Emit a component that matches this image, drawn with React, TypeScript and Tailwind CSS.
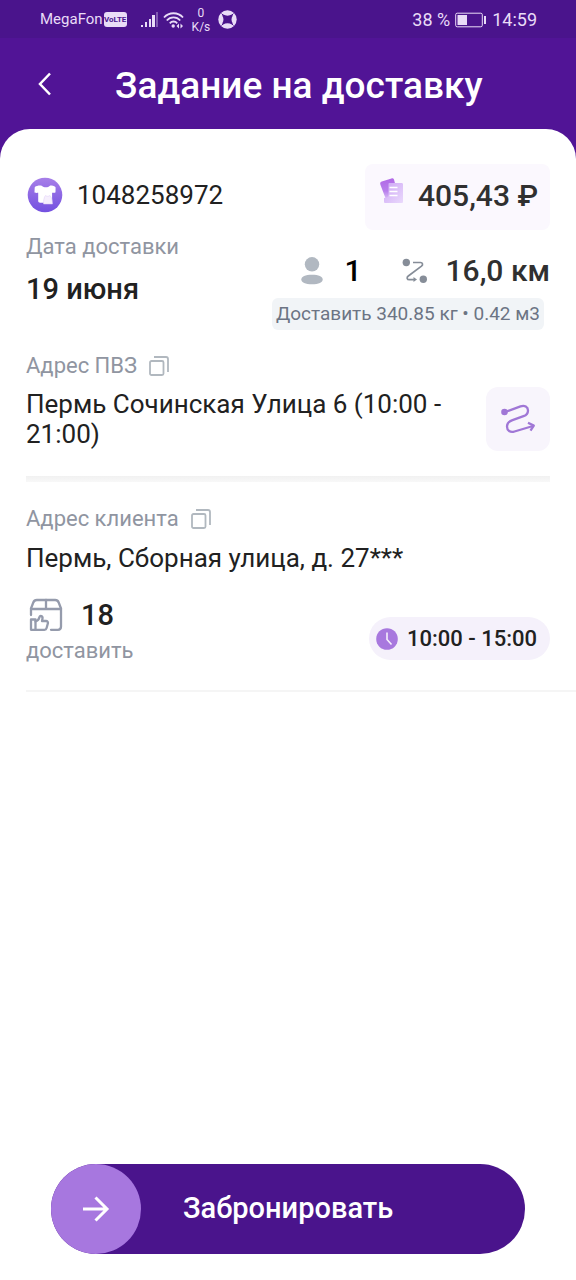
import React from "react";

const order = {
  id: "1048258972",
  price: "405,43 ₽",
  date: "19 июня",
  people: "1",
  distance: "16,0 км",
  cargo: "Доставить 340.85 кг • 0.42 м3",
  pickup: "Пермь Сочинская Улица 6 (10:00 - 21:00)",
  client: "Пермь, Сборная улица, д. 27***",
  parcels: "18",
  slot: "10:00 - 15:00",
};

function SignalIcon() {
  return (
    <svg className="h-[18px] w-[18px]" viewBox="0 0 18 18" fill="currentColor">
      <rect x="0" y="14" width="2" height="2" />
      <rect x="4" y="11" width="2" height="5" />
      <rect x="8" y="8" width="2" height="8" />
      <rect x="11" y="4" width="3" height="12" />
      <rect x="15" y="1" width="2" height="15" opacity="0.35" />
    </svg>
  );
}

function WifiIcon() {
  return (
    <svg className="h-[18px] w-[21px]" viewBox="0 0 21 18" fill="none" stroke="currentColor" strokeWidth="1.8">
      <path d="M1 6.5C6 0.8 15 0.8 20 6.5" />
      <path d="M3.8 9.5c3.6-4.2 9.8-4.2 13.4 0" />
      <path d="M6.8 12.3c2-2.4 5.4-2.4 7.4 0" />
      <circle cx="10.2" cy="15" r="1.7" fill="currentColor" stroke="none" />
      <path d="M16 12.5v5l-2.5-2.5zM17.5 12.5v5l2.5-2.5z" fill="currentColor" stroke="none" />
    </svg>
  );
}

function BallIcon() {
  return (
    <svg className="h-[19px] w-[19px]" viewBox="0 0 19 19" fill="none">
      <circle cx="9.5" cy="9.5" r="9.2" fill="currentColor" />
      <path
        d="M5.2 4.6c2.4 1.5 6.2 1.5 8.6 0l1 .9c-1.7 2.4-1.7 5.6 0 8l-1 .9c-2.4-1.5-6.2-1.5-8.6 0l-1-.9c1.7-2.4 1.7-5.6 0-8z"
        fill="#4a148c"
      />
      <path d="M3.5 3.5l3 3M15.5 3.5l-3 3M3.5 15.5l3-3M15.5 15.5l-3-3" stroke="#4a148c" strokeWidth="1" />
    </svg>
  );
}

function BatteryIcon() {
  return (
    <svg className="h-[16px] w-[32px]" viewBox="0 0 32 16" fill="none">
      <rect x="0.7" y="1.2" width="26.6" height="13.6" rx="1.5" stroke="currentColor" strokeWidth="1" />
      <rect x="2.5" y="3" width="9.5" height="10" fill="currentColor" />
      <rect x="29" y="4" width="2" height="8" fill="currentColor" />
    </svg>
  );
}

function StatusBar() {
  return (
    <div className="flex h-[38px] items-center justify-between bg-[#4a148c] pt-px pr-[39px] pl-10 text-[#e9dcf7]">
      <div className="flex items-center">
        <span className="text-[15px]">MegaFon</span>
        <span className="ml-px flex h-[15px] w-[23px] items-center justify-center rounded-[3px] bg-[#e9dcf7] text-[8px] font-bold text-[#4a148c]">
          VoLTE
        </span>
        <span className="ml-[14px]">
          <SignalIcon />
        </span>
        <span className="ml-1">
          <WifiIcon />
        </span>
        <span className="ml-2 flex flex-col items-center text-[12px] leading-[14px]">
          <span>0</span>
          <span>K/s</span>
        </span>
        <span className="ml-2">
          <BallIcon />
        </span>
      </div>
      <div className="flex items-center gap-[5px] text-[18px]">
        <span>38 %</span>
        <BatteryIcon />
        <span>14:59</span>
      </div>
    </div>
  );
}

function ShirtIcon() {
  return (
    <svg className="h-[36px] w-[36px]" viewBox="0 0 36 36">
      <defs>
        <linearGradient id="shirtBg" x1="0" y1="0" x2="0" y2="1">
          <stop offset="0" stopColor="#a77fe8" />
          <stop offset="1" stopColor="#7350e0" />
        </linearGradient>
      </defs>
      <circle cx="18" cy="18" r="17.3" fill="url(#shirtBg)" />
      <path
        d="M11.500 8.500c-2 .5-3.500 1-3.800 2l-.2 4.500c.1.900 1 1 3.700.8v8.200c0 1.200.8 1.700 2 1.700h10c1.200 0 1.900-.5 1.900-1.700v-8.200c2.300.2 3.300 0 3.400-.8l.1-4.500c-.3-1-2-1.600-4-2-1 0-1.700 0-2 .5-1.300 1.800-6 1.800-7.600 0-.5-.6-2.500-.6-3.500-.5z"
        fill="#fff"
      />
      <path d="M16.500 27c0-3.500.5-7 2-8.500 1.500 1 3 1 4.500 0 1.500 1.500 2.500 5 2.500 8.500z" fill="#f6effd" stroke="#dccbf6" strokeWidth="0.500" />
    </svg>
  );
}

function PapersIcon() {
  return (
    <svg className="h-[26px] w-[25px]" viewBox="0 0 25 26">
      <defs>
        <linearGradient id="paperBack" x1="0" y1="0" x2="0" y2="1">
          <stop offset="0" stopColor="#b168e6" />
          <stop offset="0.6" stopColor="#b87fec" />
          <stop offset="1" stopColor="#dcc2f8" />
        </linearGradient>
        <linearGradient id="paperFront" x1="0" y1="0" x2="1" y2="1">
          <stop offset="0" stopColor="#cda6f5" />
          <stop offset="1" stopColor="#ead9fc" />
        </linearGradient>
      </defs>
      <path d="M2.800 3.600L12.500.4c1.200-.3 2 .1 2.500 1.200L20 20.500l-13 1L1.500 7c-.7-1.800-.3-2.900 1.300-3.400z" fill="url(#paperBack)" />
      <path
        d="M10.500 5h12c1 0 1.500.5 1.500 1.500v17c0 1-.5 1.500-1.500 1.500h-16c-1 0-1.500-.5-1.500-1.500V20c3 0 4.500-1 4.500-3V6c0-.6.400-1 1-1z"
        fill="url(#paperFront)"
      />
      <path d="M10.500 9.500h8M10.500 13.500h8M10.500 17.500h8" stroke="#fff" strokeWidth="1.700" />
    </svg>
  );
}

function PersonIcon() {
  return (
    <svg className="h-[28px] w-[22px]" viewBox="0 0 22 28" fill="#b1b8c1">
      <circle cx="11" cy="7.300" r="7.200" />
      <path d="M.3 22.500c0-3 4-4.800 10.700-4.800s10.700 1.800 10.700 4.800-4 4.800-10.700 4.800S.3 25.500.3 22.500z" />
    </svg>
  );
}

function DistanceIcon() {
  return (
    <svg className="h-[26px] w-[26px]" viewBox="0 0 26 26" fill="none" stroke="#868d98" strokeWidth="1.700">
      <circle cx="4.300" cy="4.500" r="3.700" fill="#868d98" stroke="none" />
      <circle cx="21.300" cy="21.300" r="3.700" fill="#868d98" stroke="none" />
      <path d="M11 4.500h7.500c2.300 0 2.700 2.300 1 3.700L6.300 18c-2 1.600-1.300 3.700 1 3.700H13" />
      <path d="M11.500 19l3.500 2.500-3.500 2.500z" fill="#868d98" stroke="none" />
    </svg>
  );
}

function CopyIcon() {
  return (
    <svg className="h-5 w-5" viewBox="0 0 20 20" fill="none" stroke="#b1b8bf" strokeWidth="1.800">
      <rect x="1" y="5" width="13.500" height="14" rx="1.500" />
      <path d="M5 1h12c1.200 0 2 .8 2 2v13" />
    </svg>
  );
}

function RouteIcon() {
  return (
    <svg className="h-[32px] w-[36px]" viewBox="0 0 36 32" fill="none" stroke="#a077d6" strokeWidth="2.300">
      <circle cx="4.500" cy="9" r="3.300" fill="#a077d6" stroke="none" />
      <path d="M5 9l15.500-5.600c4.200-1.500 7.500.6 7.500 4 0 3-1.500 4.700-4.500 5.800l-11 4c-3.500 1.200-5.500 3-5.500 6.300 0 4 3.200 6.500 7.500 5L33 23" />
      <path d="M28 19.800l5.800 2.800-3.300 5" strokeLinejoin="round" />
    </svg>
  );
}

function ParcelIcon() {
  return (
    <svg
      className="h-[34px] w-[34px]"
      viewBox="0 0 34 34"
      fill="none"
      stroke="#959bac"
      strokeWidth="2.300"
      strokeLinejoin="round"
      strokeLinecap="round"
    >
      <path d="M2 17V10.500L4.300 4.500C5 2.700 6 2 7.800 2h18.400c1.800 0 2.800.7 3.500 2.500L32 10.500V28.500c0 2-1 3.300-3 3.300h-7" />
      <path d="M2 11h30M17 2v9" />
      <path d="M2 21.500h4.500v10.300H2z" />
      <path d="M6.500 23.500c2.500-.7 3.500-2.300 4-4.500.4-1.800 3.500-1 3 1.500l-.5 2.500h4c1.500 0 2.200 1 1.900 2.200l-1.300 4.800c-.3 1.200-1 1.800-2.200 1.800H6.500" />
    </svg>
  );
}

function ClockIcon() {
  return (
    <svg className="h-[22px] w-[22px]" viewBox="0 0 22 22" fill="none">
      <circle cx="11" cy="11" r="10.800" fill="#a878de" />
      <path d="M11 4.500v7l4.500 5" stroke="#f5effc" strokeWidth="1.600" />
    </svg>
  );
}

function AddressLabel({ title }: { title: string }) {
  return (
    <div className="flex items-center gap-3 text-[22px] leading-[26px] text-[#9095a1]">
      <h2>{title}</h2>
      <button type="button" aria-label="Скопировать адрес">
        <CopyIcon />
      </button>
    </div>
  );
}

export default function App() {
  return (
    <div className="flex min-h-screen flex-col bg-[#511496] font-[Roboto,sans-serif] text-[#212121]">
      <StatusBar />
      <header className="flex h-[91px] items-center pt-1 text-white">
        <button type="button" aria-label="Назад" className="ml-[37px] pb-1">
          <svg className="h-6 w-4" viewBox="0 0 16 24" fill="none" stroke="currentColor" strokeWidth="2.500">
            <path d="M13 1.500L3 12l10 10.500" />
          </svg>
        </button>
        <h1 className="ml-[62px] text-[37px] font-medium">Задание на доставку</h1>
      </header>

      <main className="flex flex-1 flex-col rounded-t-[30px] bg-white pt-[35px]">
        <div className="px-[26px]">
          <div className="flex items-center justify-between">
            <div className="flex items-center gap-[14px] pb-1 pl-px text-[26px]">
              <ShirtIcon />
              <span>{order.id}</span>
            </div>
            <div className="flex h-[66px] items-center gap-[14px] rounded-lg bg-[#fbf8fe] pr-3 pb-1 pl-[14px] text-[30px] font-medium text-[#303030]">
              <span className="pb-2">
                <PapersIcon />
              </span>
              <span>{order.price}</span>
            </div>
          </div>

          <div className="mt-1 flex justify-between">
            <div>
              <div className="text-[22px] leading-[26px] text-[#9095a1]">Дата доставки</div>
              <div className="mt-[11px] text-[29px] leading-9 font-medium">{order.date}</div>
            </div>
            <div className="flex flex-col items-end pt-[19px]">
              <div className="flex items-center text-[30px] leading-9 font-medium text-[#303030]">
                <PersonIcon />
                <span className="ml-[22px] text-black">{order.people}</span>
                <span className="mr-[18px] ml-10">
                  <DistanceIcon />
                </span>
                <span>{order.distance}</span>
              </div>
              <div className="mt-[9px] mr-[6px] rounded-md bg-[#f1f4f7] px-1 text-[19px] leading-8 text-[#6c7484]">
                {order.cargo}
              </div>
            </div>
          </div>

          <section className="mt-[23px]">
            <AddressLabel title="Адрес ПВЗ" />
            <div className="mt-2 flex items-center justify-between">
              <p className="max-w-[420px] text-[26px] leading-[30px]">{order.pickup}</p>
              <button
                type="button"
                aria-label="Построить маршрут"
                className="flex h-16 w-16 shrink-0 items-center justify-center rounded-xl bg-[#f8f5fc]"
              >
                <RouteIcon />
              </button>
            </div>
          </section>

          <hr className="mt-[25px] h-[6px] border-0 bg-linear-to-b from-[#f1f1f1] to-[#f8f8f8]" />

          <section className="mt-6">
            <AddressLabel title="Адрес клиента" />
            <p className="mt-[11px] text-[26px] leading-[30px]">{order.client}</p>
          </section>
        </div>

        <div className="mt-6 ml-[26px] flex items-end justify-between border-b-2 border-[#f5f5f5] pr-[26px] pb-[26px]">
          <div>
            <div className="flex items-center gap-[18px] pl-[3px] text-[29px] leading-9 font-medium">
              <ParcelIcon />
              <span>{order.parcels}</span>
            </div>
            <div className="mt-[5px] text-[22px] leading-[26px] text-[#9095a1]">доставить</div>
          </div>
          <div className="mb-1 flex h-[43px] items-center gap-[9px] rounded-full bg-[#f5f1fb] pr-[13px] pl-[7px] text-[22px] font-medium">
            <ClockIcon />
            <span>{order.slot}</span>
          </div>
        </div>

        <div className="mt-auto px-[51px] pb-[26px]">
          <button
            type="button"
            className="flex h-[90px] w-full items-center rounded-full bg-[#4a148c] text-[29px] font-medium text-white"
          >
            <span className="flex h-[90px] w-[90px] items-center justify-center rounded-full bg-[#a777df]">
              <svg className="h-[28px] w-[28px]" viewBox="0 0 28 28" fill="none" stroke="currentColor" strokeWidth="3">
                <path d="M1 14h24M13.500 2.500L25 14 13.500 25.500" />
              </svg>
            </span>
            <span className="ml-[42px]">Забронировать</span>
          </button>
        </div>
      </main>
    </div>
  );
}
